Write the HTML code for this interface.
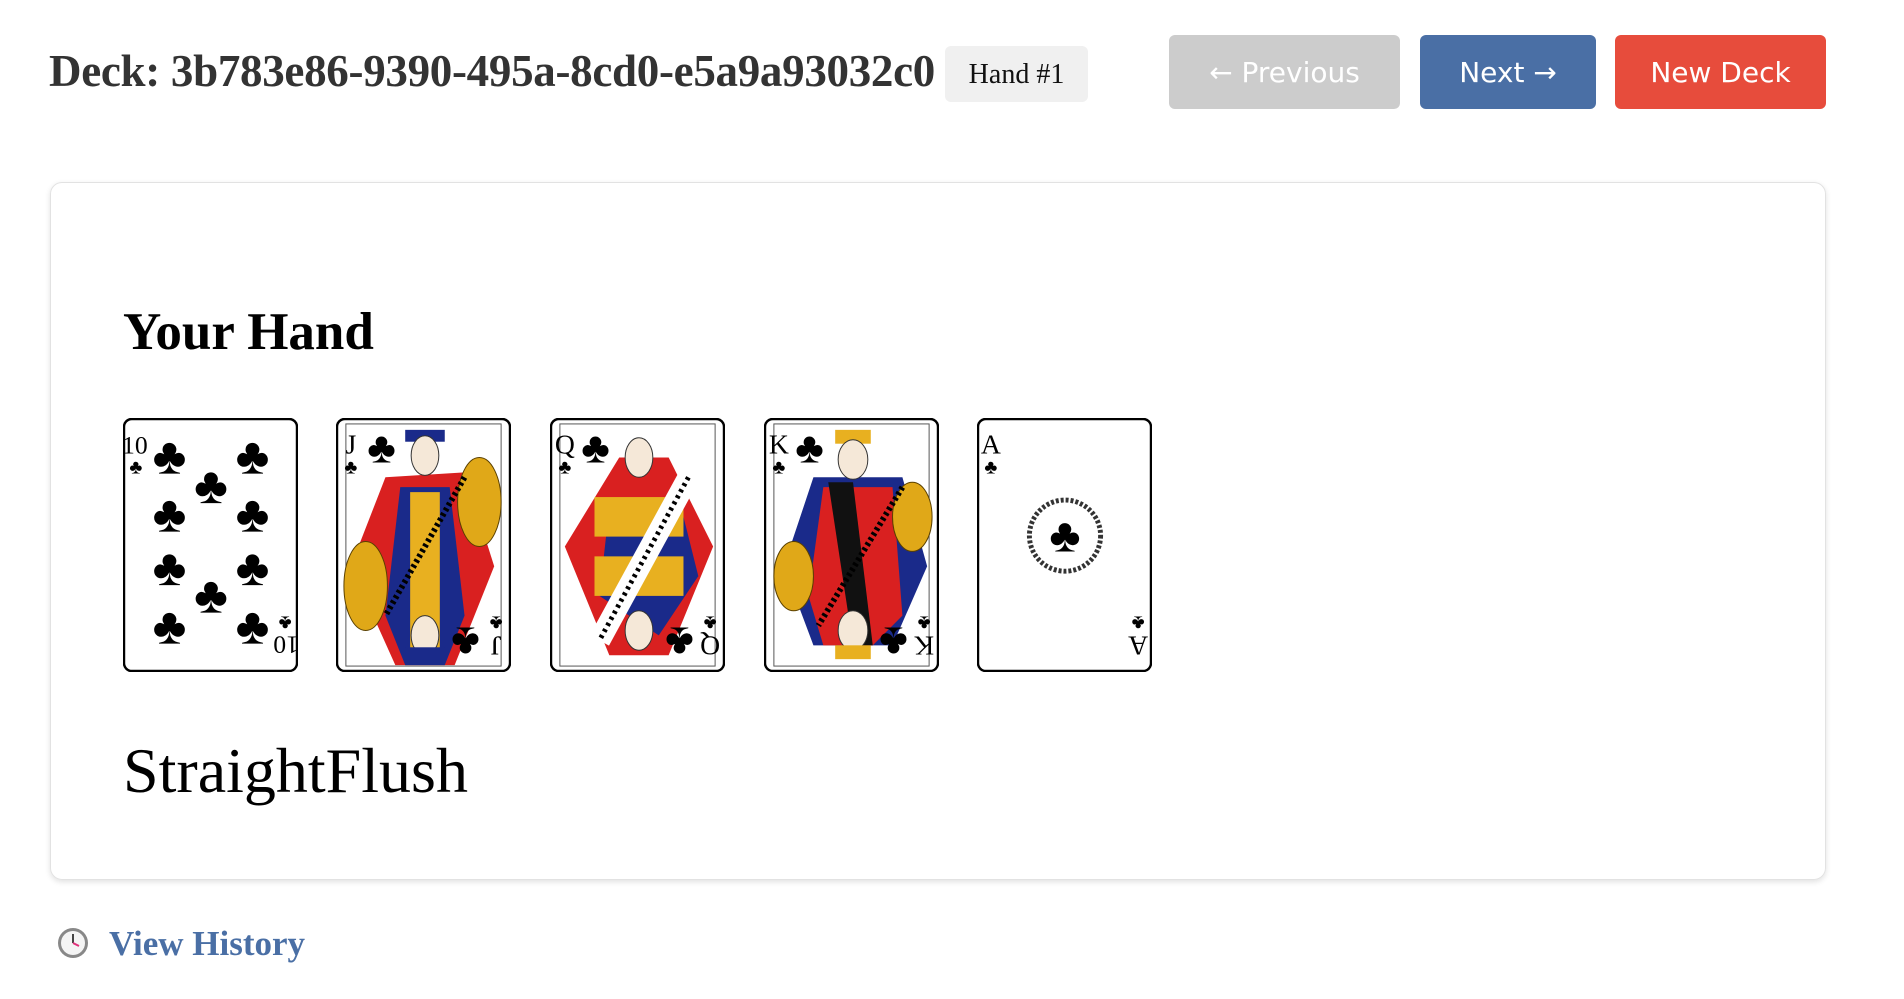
<!DOCTYPE html>
<html><head><meta charset="utf-8"><style>
body{margin:0;width:1904px;height:999px;background:#fff;position:relative;overflow:hidden;font-family:"Liberation Serif",serif}
.t{position:absolute;left:49px;top:45px;font-size:45px;font-weight:bold;color:#333;white-space:nowrap;letter-spacing:-0.3px}
.badge{position:absolute;left:945px;top:46px;width:143px;height:56px;background:#f0f0f0;border-radius:6px;font-size:28px;line-height:58px;text-align:center;color:#111}
.btn{position:absolute;top:35px;height:74px;border-radius:6px;color:#fff;font-family:"DejaVu Sans",sans-serif;font-size:28px;line-height:76px;text-align:center}
.box{position:absolute;left:50px;top:182px;width:1774px;height:696px;border:1px solid #e2e2e2;border-radius:12px;box-shadow:0 2px 6px rgba(0,0,0,.12)}
h2{position:absolute;left:123px;top:297px;margin:0;font-size:53px;font-weight:bold;color:#000;line-height:70px}
.card{position:absolute;top:418px;width:175px;height:254px}
.res{position:absolute;left:123px;top:731px;font-size:64px;line-height:80px;color:#000}
.vh{position:absolute;left:109px;top:922px;font-size:35px;font-weight:bold;color:#4a6fa5;line-height:44px}
</style></head><body>
<div class="t">Deck: 3b783e86-9390-495a-8cd0-e5a9a93032c0</div>
<div class="badge">Hand #1</div>
<div class="btn" style="left:1169px;width:231px;background:#cccccc">← Previous</div>
<div class="btn" style="left:1420px;width:176px;background:#4a6fa5">Next →</div>
<div class="btn" style="left:1615px;width:211px;background:#e74c3c">New Deck</div>
<div class="box"></div>
<h2>Your Hand</h2>

<svg class="card" style="left:123px" viewBox="0 0 177 257" preserveAspectRatio="none"><rect x="1" y="1" width="175" height="255" rx="8" fill="#fff" stroke="#000" stroke-width="2.5"/>
<g font-family="Liberation Serif" font-size="52" text-anchor="middle">
<text x="47" y="56">♣</text><text x="131" y="56">♣</text><text x="89" y="86">♣</text>
<text x="47" y="115">♣</text><text x="131" y="115">♣</text>
<text x="47" y="169">♣</text><text x="131" y="169">♣</text><text x="89" y="197">♣</text>
<text x="47" y="228">♣</text><text x="131" y="228">♣</text></g>
<text x="12" y="36" font-size="26" font-family="Liberation Serif" text-anchor="middle">10</text><text x="13" y="56" font-size="20" text-anchor="middle">♣</text>
<g transform="rotate(180 88.5 128.5)"><text x="12" y="36" font-size="26" font-family="Liberation Serif" text-anchor="middle">10</text><text x="13" y="56" font-size="20" text-anchor="middle">♣</text></g>
</svg>

<svg class="card" style="left:336px" viewBox="0 0 177 257" preserveAspectRatio="none"><rect x="1" y="1" width="175" height="255" rx="8" fill="#fff" stroke="#000" stroke-width="2.5"/>
<rect x="10" y="6" width="157" height="245" fill="none" stroke="#555"/>
<polygon points="50,60 130,55 160,150 120,250 60,250 15,150" fill="#d92020"/>
<polygon points="65,70 115,70 130,200 110,250 70,250 50,200" fill="#1a2a8a"/>
<rect x="75" y="75" width="30" height="160" fill="#e8b020"/>
<ellipse cx="145" cy="85" rx="22" ry="45" fill="#e0a818" stroke="#5a4000"/>
<ellipse cx="30" cy="170" rx="22" ry="45" fill="#e0a818" stroke="#5a4000"/>
<line x1="130" y1="60" x2="50" y2="200" stroke="#000" stroke-width="6" stroke-dasharray="3 3"/>
<rect x="70" y="12" width="40" height="12" fill="#1a2a8a"/><ellipse cx="90" cy="38" rx="14" ry="20" fill="#f5e8d8" stroke="#333"/>
<ellipse cx="90" cy="220" rx="14" ry="20" fill="#f5e8d8" stroke="#333"/><rect x="70" y="232" width="40" height="12" fill="#1a2a8a"/>
<text x="15" y="36" font-size="28" font-family="Liberation Serif" text-anchor="middle">J</text><text x="15" y="56" font-size="20" text-anchor="middle">♣</text><text x="46" y="45" font-size="44" text-anchor="middle">♣</text>
<g transform="rotate(180 88.5 128.5)"><text x="15" y="36" font-size="28" font-family="Liberation Serif" text-anchor="middle">J</text><text x="15" y="56" font-size="20" text-anchor="middle">♣</text><text x="46" y="45" font-size="44" text-anchor="middle">♣</text></g>
</svg>

<svg class="card" style="left:550px" viewBox="0 0 177 257" preserveAspectRatio="none"><rect x="1" y="1" width="175" height="255" rx="8" fill="#fff" stroke="#000" stroke-width="2.5"/>
<rect x="10" y="6" width="157" height="245" fill="none" stroke="#555"/>
<polygon points="70,40 120,40 165,130 120,240 60,240 15,130" fill="#d92020"/>
<polygon points="60,90 130,80 150,160 110,220 50,180" fill="#1a2a8a"/>
<rect x="45" y="80" width="90" height="40" fill="#e8b020"/><rect x="45" y="140" width="90" height="40" fill="#e8b020"/>
<line x1="140" y1="60" x2="50" y2="225" stroke="#fff" stroke-width="22"/>
<line x1="140" y1="60" x2="50" y2="225" stroke="#000" stroke-width="5" stroke-dasharray="3 4"/>
<ellipse cx="90" cy="40" rx="14" ry="20" fill="#f5e8d8" stroke="#333"/><ellipse cx="90" cy="215" rx="14" ry="20" fill="#f5e8d8" stroke="#333"/>
<text x="15" y="36" font-size="28" font-family="Liberation Serif" text-anchor="middle">Q</text><text x="15" y="56" font-size="20" text-anchor="middle">♣</text><text x="46" y="45" font-size="44" text-anchor="middle">♣</text>
<g transform="rotate(180 88.5 128.5)"><text x="15" y="36" font-size="28" font-family="Liberation Serif" text-anchor="middle">Q</text><text x="15" y="56" font-size="20" text-anchor="middle">♣</text><text x="46" y="45" font-size="44" text-anchor="middle">♣</text></g>
</svg>

<svg class="card" style="left:764px" viewBox="0 0 177 257" preserveAspectRatio="none"><rect x="1" y="1" width="175" height="255" rx="8" fill="#fff" stroke="#000" stroke-width="2.5"/>
<rect x="10" y="6" width="157" height="245" fill="none" stroke="#555"/>
<polygon points="50,60 140,60 165,150 130,230 50,230 20,150" fill="#1a2a8a"/>
<polygon points="60,70 130,70 140,200 110,230 60,230 45,180" fill="#d92020"/>
<polygon points="65,65 90,65 110,230 90,230" fill="#111"/>
<ellipse cx="150" cy="100" rx="20" ry="35" fill="#e0a818" stroke="#5a4000"/><ellipse cx="30" cy="160" rx="20" ry="35" fill="#e0a818" stroke="#5a4000"/>
<line x1="140" y1="70" x2="55" y2="210" stroke="#000" stroke-width="6" stroke-dasharray="3 3"/>
<rect x="72" y="12" width="36" height="14" fill="#e8b020"/><ellipse cx="90" cy="42" rx="15" ry="20" fill="#f5e8d8" stroke="#333"/>
<ellipse cx="90" cy="215" rx="15" ry="20" fill="#f5e8d8" stroke="#333"/><rect x="72" y="230" width="36" height="14" fill="#e8b020"/>
<text x="15" y="36" font-size="28" font-family="Liberation Serif" text-anchor="middle">K</text><text x="15" y="56" font-size="20" text-anchor="middle">♣</text><text x="46" y="45" font-size="44" text-anchor="middle">♣</text>
<g transform="rotate(180 88.5 128.5)"><text x="15" y="36" font-size="28" font-family="Liberation Serif" text-anchor="middle">K</text><text x="15" y="56" font-size="20" text-anchor="middle">♣</text><text x="46" y="45" font-size="44" text-anchor="middle">♣</text></g>
</svg>

<svg class="card" style="left:977px" viewBox="0 0 177 257" preserveAspectRatio="none"><rect x="1" y="1" width="175" height="255" rx="8" fill="#fff" stroke="#000" stroke-width="2.5"/>
<circle cx="89" cy="119" r="36" fill="none" stroke="#333" stroke-width="5" stroke-dasharray="3 2"/>
<text x="89" y="135" font-size="48" text-anchor="middle">♣</text>
<text x="14" y="36" font-size="28" font-family="Liberation Serif" text-anchor="middle">A</text><text x="14" y="56" font-size="20" text-anchor="middle">♣</text>
<g transform="rotate(180 88.5 128.5)"><text x="14" y="36" font-size="28" font-family="Liberation Serif" text-anchor="middle">A</text><text x="14" y="56" font-size="20" text-anchor="middle">♣</text></g>
</svg>

<div class="res">StraightFlush</div>
<svg style="position:absolute;left:56px;top:926px" width="34" height="34" viewBox="0 0 34 34"><circle cx="17" cy="17" r="15" fill="#888"/><circle cx="17" cy="17" r="12" fill="#f4f4f4"/><line x1="17" y1="17" x2="17" y2="8" stroke="#444" stroke-width="2"/><line x1="17" y1="17" x2="23" y2="20" stroke="#e0307a" stroke-width="2"/></svg>
<div class="vh">View History</div>
</body></html>
